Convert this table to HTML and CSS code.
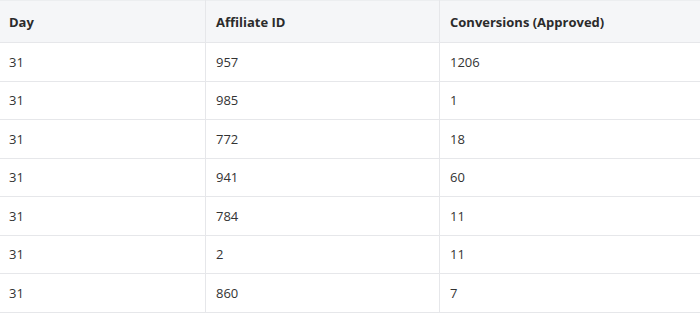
FILE: index.html
```html
<!DOCTYPE html>
<html lang="en">
<head>
    <meta charset="UTF-8">
    <meta name="viewport" content="width=device-width, initial-scale=1.0">
    <title>Conversions Report</title>
    <link rel="stylesheet" href="styles.css">
</head>
<body>
    <table class="report">
        <colgroup>
            <col class="col-day">
            <col class="col-aff">
            <col class="col-conv">
        </colgroup>
        <thead>
            <tr>
                <th>Day</th>
                <th>Affiliate ID</th>
                <th>Conversions (Approved)</th>
            </tr>
        </thead>
        <tbody>
            <tr><td>31</td><td>957</td><td>1206</td></tr>
            <tr><td>31</td><td>985</td><td>1</td></tr>
            <tr><td>31</td><td>772</td><td>18</td></tr>
            <tr><td>31</td><td>941</td><td>60</td></tr>
            <tr><td>31</td><td>784</td><td>11</td></tr>
            <tr><td>31</td><td>2</td><td>11</td></tr>
            <tr><td>31</td><td>860</td><td>7</td></tr>
        </tbody>
    </table>
</body>
</html>
```

FILE: styles.css
```css
body {
    font-family: "Open Sans", Arial, sans-serif;
    margin: 0;
    padding: 0;
    background: #fff;
    color: #333;
    overflow: hidden;
}

table.report {
    border-collapse: collapse;
    table-layout: fixed;
    width: 703px;
    margin-left: -2px;
    font-size: 13px;
}

.col-day {
    width: 207px;
}

.col-aff {
    width: 234px;
}

th, td {
    text-align: left;
    padding: 0 10px;
    border: 1px solid #e6e7ea;
}

th {
    height: 41px;
    background: #f5f6f8;
    font-weight: 700;
    color: #2b2b2b;
    border-top-color: #eceef0;
}

td {
    height: 37.5px;
    color: #333;
}
```
